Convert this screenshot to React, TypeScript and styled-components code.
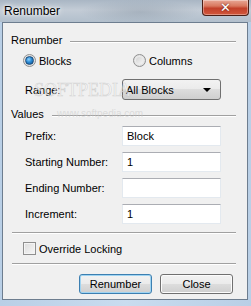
import React from "react";
import styled, {createGlobalStyle} from "styled-components";

const GlobalStyle = createGlobalStyle`
  html, body {
    margin: 0;
    padding: 0;
    background: #ffffff;
  }
  * {
    box-sizing: border-box;
  }
`;

const Window = styled.div`
  width: 251px;
  height: 306px;
  display: flex;
  flex-direction: column;
  background: linear-gradient(90deg, #b9cfe6 0%, #c9dcef 50%, #b9cfe6 100%);
  font-family: "Liberation Sans", Arial, sans-serif;
  font-size: 11px;
  color: #000;
  overflow: hidden;
`;

const TitleBar = styled.div`
  height: 22px;
  flex: none;
  display: flex;
  justify-content: space-between;
  align-items: flex-start;
  background:
    radial-gradient(ellipse 60px 12px at 140px 12px, rgba(120, 135, 150, 0.35), transparent),
    linear-gradient(180deg, #a9b6c4 0%, #c3ccd6 45%, #b2bfcc 100%);
`;

const Title = styled.span`
  font-family: "Liberation Sans", Arial, sans-serif;
  font-size: 12px;
  line-height: 14px;
  margin: 4px 0 0 4px;
  text-shadow: 0 0 6px #ffffff, 0 0 3px #ffffff;
`;

const CloseButton = styled.div`
  width: 47px;
  height: 16px;
  margin-right: 2px;
  border: 1px solid #4b1f16;
  border-top: none;
  border-radius: 0 0 4px 4px;
  background: linear-gradient(180deg, #e8a796 0%, #d9785f 40%, #c2402a 55%, #d2583c 100%);
  box-shadow: inset 0 0 0 1px rgba(255, 255, 255, 0.35);
  display: flex;
  align-items: center;
  justify-content: center;
  color: #fff;
  font-family: "DejaVu Sans", sans-serif;
  font-weight: bold;
  font-size: 13px;
  line-height: 14px;
  text-shadow: 0 0 2px #5a1a10;
`;

const Client = styled.div`
  position: relative;
  margin: 0 3px 0 2px;
  height: 278px;
  flex: none;
  background: #f0f0f0;
  border: 1px solid #6d7d8f;
  display: flex;
  flex-direction: column;
`;

const GroupHeader = styled.div<{ $top: number }>`
  display: flex;
  align-items: center;
  gap: 8px;
  height: 13px;
  margin: ${p => p.$top}px 11px 0 8px;
  line-height: 13px;

  &::after {
    content: "";
    flex: 1;
    height: 1px;
    margin-top: 2px;
    background: #a0a0a0;
    box-shadow: 0 1px 0 #ffffff;
  }
`;

const Row = styled.div<{ $top: number; $left: number }>`
  display: flex;
  align-items: center;
  margin: ${p => p.$top}px 0 0 ${p => p.$left}px;
`;

const Choice = styled.label<{ $width?: number }>`
  display: flex;
  align-items: center;
  gap: 3px;
  height: 13px;
  width: ${p => (p.$width ? `${p.$width}px` : "auto")};
`;

const RadioDot = styled.span<{ $on?: boolean }>`
  width: 13px;
  height: 13px;
  border-radius: 50%;
  border: 1px solid #8f8f8f;
  background: radial-gradient(circle at 50% 50%, #ffffff 0%, #e6e6e6 60%, #cfcfcf 100%);
  display: flex;
  align-items: center;
  justify-content: center;

  &::after {
    content: "";
    width: 7px;
    height: 7px;
    border-radius: 50%;
    background: ${p =>
      p.$on
        ? "radial-gradient(circle at 40% 35%, #8fd3ff 0%, #2a8ad4 45%, #0d4f8c 100%)"
        : "linear-gradient(135deg, #d4d4d4, #f4f4f4)"};
    border: ${p => (p.$on ? "1px solid #1c4a78" : "none")};
  }
`;

const CheckBoxMark = styled.span`
  width: 13px;
  height: 13px;
  border: 1px solid #8f8f8f;
  background: linear-gradient(135deg, #dcdcdc 0%, #f7f7f7 100%);
  box-shadow: inset 0 0 0 1px #f4f4f4;
`;

const FieldLabel = styled.span`
  width: 97px;
`;

const Select = styled.div`
  width: 99px;
  height: 21px;
  border: 1px solid #707070;
  border-radius: 3px;
  background: linear-gradient(180deg, #f2f2f2 0%, #ebebeb 49%, #dddddd 50%, #cfcfcf 100%);
  display: flex;
  align-items: center;
  justify-content: space-between;
  padding: 0 9px 0 3px;

  &::after {
    content: "";
    border-left: 4px solid transparent;
    border-right: 4px solid transparent;
    border-top: 4px solid #000;
  }
`;

const FieldList = styled.div`
  display: flex;
  flex-direction: column;
  gap: 6px;
  margin: 5px 0 0 22px;
`;

const Input = styled.div`
  width: 99px;
  height: 20px;
  background: #ffffff;
  border: 1px solid #e3e9ef;
  border-top-color: #abadb3;
  padding: 0 4px;
  line-height: 18px;
`;

const Separator = styled.div<{ $top: number }>`
  height: 1px;
  margin: ${p => p.$top}px 11px 0 9px;
  background: #a0a0a0;
  box-shadow: 0 1px 0 #ffffff;
`;

const ButtonBar = styled.div`
  display: flex;
  justify-content: flex-end;
  gap: 8px;
  margin: 10px 14px 0 0;
`;

const Button = styled.div<{ $default?: boolean }>`
  width: 73px;
  height: 20px;
  border: 1px solid ${p => (p.$default ? "#3c7fb1" : "#707070")};
  border-radius: 3px;
  background: linear-gradient(180deg, #f2f2f2 0%, #ebebeb 49%, #dddddd 50%, #cfcfcf 100%);
  box-shadow: inset 0 0 0 1px ${p => (p.$default ? "#9fd4f2" : "#fcfcfc")};
  display: flex;
  align-items: center;
  justify-content: center;
  font-size: 11px;
`;

const Watermark = styled.span<{ $x: number; $y: number; $size: number; $serif?: boolean }>`
  position: absolute;
  left: ${p => p.$x}px;
  top: ${p => p.$y}px;
  font-size: ${p => p.$size}px;
  line-height: 1;
  font-family: ${p => (p.$serif ? '"Liberation Serif", serif' : '"Liberation Sans", sans-serif')};
  color: ${p => (p.$serif ? "rgba(255, 255, 255, 0.55)" : "rgba(200, 200, 200, 0.55)")};
  -webkit-text-stroke: ${p => (p.$serif ? "0.6px rgba(180, 180, 180, 0.55)" : "0")};
  pointer-events: none;
`;

const fields = [
    {label: "Prefix:", value: "Block"},
    {label: "Starting Number:", value: "1"},
    {label: "Ending Number:", value: ""},
    {label: "Increment:", value: "1"},
];

export default function App() {
    return <>
        <GlobalStyle/>
        <Window>
            <TitleBar>
                <Title>Renumber</Title>
                <CloseButton>✕</CloseButton>
            </TitleBar>
            <Client>
                <GroupHeader $top={11}>Renumber</GroupHeader>
                <Row $top={7} $left={20}>
                    <Choice $width={110}><RadioDot $on/>Blocks</Choice>
                    <Choice><RadioDot/>Columns</Choice>
                </Row>
                <Row $top={12} $left={22}>
                    <FieldLabel>Range:</FieldLabel>
                    <Select>All Blocks</Select>
                </Row>
                <GroupHeader $top={8}>Values</GroupHeader>
                <FieldList>
                    {fields.map(f => <Row key={f.label} $top={0} $left={0}>
                        <FieldLabel>{f.label}</FieldLabel>
                        <Input>{f.value}</Input>
                    </Row>)}
                </FieldList>
                <Separator $top={8}/>
                <Row $top={9} $left={20}>
                    <Choice><CheckBoxMark/>Override Locking</Choice>
                </Row>
                <Separator $top={8}/>
                <ButtonBar>
                    <Button $default>Renumber</Button>
                    <Button>Close</Button>
                </ButtonBar>
                <Watermark $x={31} $y={58} $size={18} $serif>SOFTPEDIA</Watermark>
                <Watermark $x={54} $y={86} $size={10}>www.softpedia.com</Watermark>
            </Client>
        </Window>
    </>;
}
